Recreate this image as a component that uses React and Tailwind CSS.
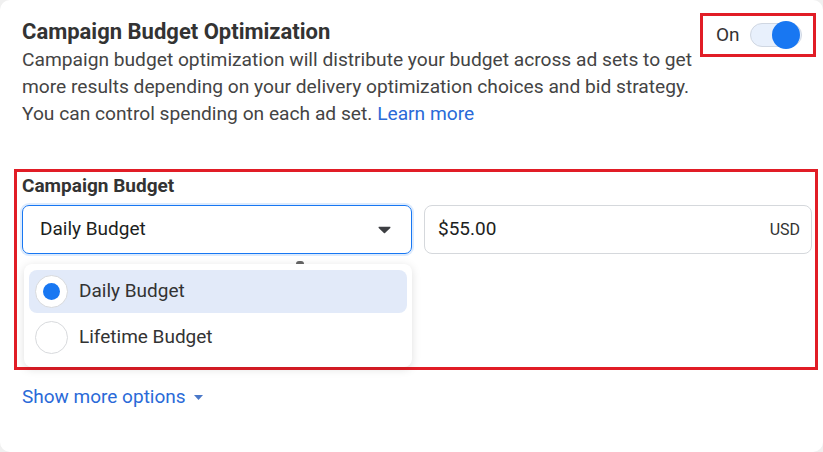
export default function App() {
  return (
    <div className="w-[823px] h-[452px] bg-[#f0f0f0] font-['Roboto',sans-serif]">
      <div className="w-full h-full bg-white rounded-[10px] pl-[22px] pt-[18px]">
        {/* Header */}
        <div className="flex">
          <div className="w-[678px]">
            <h2 className="text-[22px] leading-[28px] font-bold text-[#333]">Campaign Budget Optimization</h2>
            <p className="text-[19.2px] leading-[27px] text-[#444]">
              Campaign budget optimization will distribute your budget across ad sets to get more results depending on your delivery optimization choices and bid strategy. You can control spending on each ad set.{' '}
              <span className="text-[#2a6ad8]">Learn more</span>
            </p>
          </div>
          <div className="-mt-[5px] w-[116px] h-[44px] border-[3px] border-[#e11d26] flex items-center pl-[13px] gap-[10px]">
            <span className="text-[19px] text-[#333]">On</span>
            <div className="relative w-[52px] h-[24px] rounded-full bg-[#e8f0fc] border border-[#d0d7e2]">
              <div className="absolute right-[1px] top-[-3px] w-[28px] h-[28px] rounded-full bg-[#1877f2]" />
            </div>
          </div>
        </div>

        {/* Budget box */}
        <div className="mt-[42px] -ml-[8px] w-[804px] h-[201px] border-[3px] border-[#e11d26] pl-[5px] pr-[3px] pt-[2px]">
          <div className="text-[19px] leading-[24px] font-bold text-[#333]">Campaign Budget</div>
          <div className="flex gap-[12px] mt-[7px]">
            <div className="w-[390px] h-[49px] rounded-[7px] border border-[#1877f2] shadow-[0_0_0_2px_rgba(24,119,242,0.15)] flex items-center justify-between pl-[17px] pr-[20px]">
              <span className="text-[19px] text-[#1c1e21]">Daily Budget</span>
              <svg width="13" height="8" viewBox="0 0 13 8">
                <path d="M1.2 0.8h10.6c.6 0 .9.7.5 1.1L7 7.1c-.3.3-.8.3-1.1 0L.7 1.9C.3 1.5.6.8 1.2.8z" fill="#3d3f43" />
              </svg>
            </div>
            <div className="w-[388px] h-[49px] rounded-[8px] border border-[#d5d8dc] flex items-center justify-between pl-[13px] pr-[11px]">
              <span className="text-[19px] text-[#1c1e21]">$55.00</span>
              <span className="text-[16px] text-[#333]">USD</span>
            </div>
          </div>
          <div className="relative">
            <div className="absolute left-[274px] top-[7px] w-[8px] h-[3px] rounded-t-full bg-[#666]" />
          </div>
          <div className="ml-[2px] mt-[10px] w-[388px] h-[103px] rounded-[8px] bg-white shadow-[0_2px_10px_rgba(0,0,0,0.13)] relative px-[5px] pt-[6px]">
            <div className="h-[43px] rounded-[8px] bg-[#e2eaf9] flex items-center pl-[6px] gap-[11px]">
              <div className="w-[33px] h-[33px] rounded-full bg-white border border-[#d8dadd] flex items-center justify-center">
                <div className="w-[17px] h-[17px] rounded-full bg-[#1877f2]" />
              </div>
              <span className="text-[19px] text-[#333]">Daily Budget</span>
            </div>
            <div className="h-[47px] mt-[1px] flex items-center pl-[6px] gap-[11px]">
              <div className="w-[33px] h-[33px] rounded-full bg-white border border-[#d8dadd]" />
              <span className="text-[19px] text-[#333]">Lifetime Budget</span>
            </div>
          </div>
        </div>

        {/* Show more */}
        <div className="mt-[15px] flex items-center gap-[8px] text-[#2a6ad8] text-[19px] leading-[24px]">
          <span>Show more options</span>
          <svg width="9" height="5" viewBox="0 0 9 5">
            <path d="M0 0h9L4.5 5z" fill="#4a78c8" />
          </svg>
        </div>
      </div>
    </div>
  );
}
